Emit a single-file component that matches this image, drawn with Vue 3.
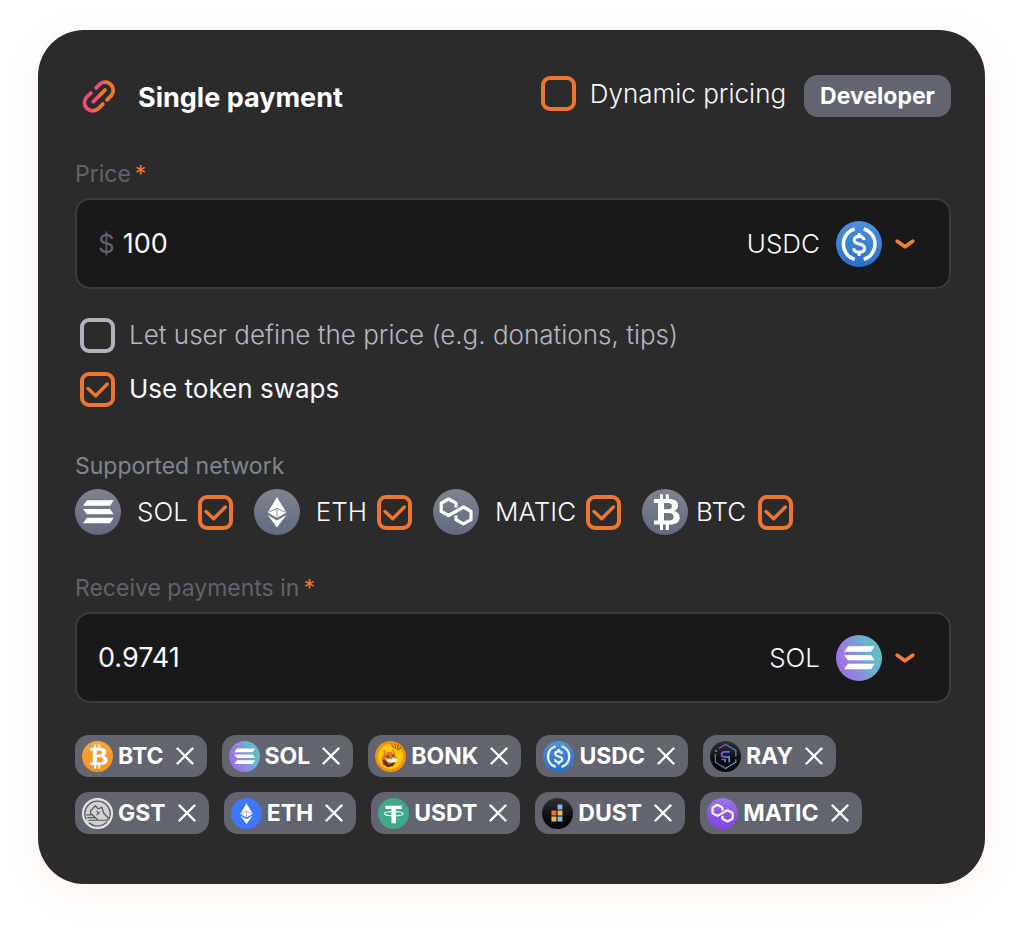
<script setup>
import { ref, reactive } from 'vue'

const dynamic = ref(false)
const userPrice = ref(false)
const swaps = ref(true)
const price = ref('100')
const receive = ref('0.9741')
const currency = ref('USDC')
const payout = ref('SOL')
const networks = reactive([
  { name: 'SOL', icon: 'sol', on: true },
  { name: 'ETH', icon: 'eth', on: true },
  { name: 'MATIC', icon: 'matic', on: true },
  { name: 'BTC', icon: 'btc', on: true, tight: true },
])
const tokenRows = reactive([
  ['BTC', 'SOL', 'BONK', 'USDC', 'RAY'],
  ['GST', 'ETH', 'USDT', 'DUST', 'MATIC'],
])
function removeToken(row, name) {
  row.splice(row.indexOf(name), 1)
}
</script>

<template>
  <main class="page">
    <svg class="sprite" aria-hidden="true">
      <defs>
        <linearGradient id="g-link"><stop offset=".38" stop-color="#ee4b77" /><stop offset=".56" stop-color="#f0762d" /></linearGradient>
        <linearGradient id="g-grey" x2="0" y2="1"><stop stop-color="#7f838f" /><stop offset="1" stop-color="#5f6b80" /></linearGradient>
        <linearGradient id="g-sol" x1="0" y1=".75" x2="1" y2=".4"><stop stop-color="#9d6de6" /><stop offset=".3" stop-color="#957fe4" /><stop offset=".75" stop-color="#69b3cf" /><stop offset="1" stop-color="#63bfc5" /></linearGradient>
        <linearGradient id="g-usdc" x2="0" y2="1"><stop stop-color="#5091d8" /><stop offset="1" stop-color="#2870cb" /></linearGradient>
        <linearGradient id="g-btc" x2="0" y2="1"><stop stop-color="#f9a545" /><stop offset="1" stop-color="#f7911a" /></linearGradient>
        <linearGradient id="g-matic" x2="0" y2="1"><stop stop-color="#a077e8" /><stop offset=".6" stop-color="#8850e6" /><stop offset="1" stop-color="#8247e5" /></linearGradient>
        <linearGradient id="g-black" x2="0" y2="1"><stop stop-color="#303030" /><stop offset=".7" stop-color="#080808" /></linearGradient>
        <linearGradient id="g-ray" x2="1" y2="1"><stop stop-color="#a943e8" /><stop offset=".55" stop-color="#4a7be8" /><stop offset="1" stop-color="#4cc6cf" /></linearGradient>
      </defs>
      <symbol id="m-sol" viewBox="0 0 46 46">
        <path fill="#fff" d="M12 11.3H38.7L35 16.7H8ZM8 20H35L38.7 25.3H12ZM12 28.7H38.7L35 34.3H8Z" />
      </symbol>
      <symbol id="m-eth" viewBox="0 0 46 46">
        <path fill="#fff" d="M23 8L32.3 23.5L23 29L13.7 23.5ZM13.7 26L23 31.5L32.3 26L23 38.5Z" />
        <path fill="none" stroke="#7c8798" stroke-width=".9" d="M14.5 23.2L23 19.5L31.5 23.2M23 19.5V29" />
      </symbol>
      <symbol id="m-matic" viewBox="0 0 46 46">
        <path fill="none" stroke="#fff" stroke-width="3.2" stroke-linejoin="round" d="M23 18.5V14.2L15.5 10L8.2 14.2V22.4L15.5 26.5L30.5 18L38 22.3V30.7L30.5 34.9L23 30.7V26.5" />
      </symbol>
      <symbol id="m-btc" viewBox="0 0 46 46">
        <path fill="#fff" fill-rule="evenodd" d="M12 10H27C33 10 36 12.5 36 16.5C36 19.5 34 21.3 32 22C35.5 22.8 37.7 25 37.7 28.5C37.7 33 34 35.5 28 35.5H12V31.5H16V14H12ZM22 14V20.3H26C28.5 20.3 30 19.2 30 17.2S28.5 14 26 14ZM22 24V31.5H27C30 31.5 31.7 30 31.7 27.7S30 24 27 24ZM18 5.3H21V10H18ZM23.8 5.3H26.8V10H23.8ZM18 35.5H21V41H18ZM23.8 35.5H26.8V41H23.8Z" />
      </symbol>
      <symbol id="m-usdc" viewBox="0 0 46 46">
        <g fill="none" stroke="#fff" stroke-width="3.4">
          <path d="M18.7 7.8A16 16 0 0 0 18.7 38.4M27.7 7.8A16 16 0 0 1 27.7 38.4" />
          <path stroke-width="3" d="M28.2 19C27.7 16.5 26 15.4 23.2 15.4C20 15.4 18.2 16.8 18.2 19.1C18.2 25 28.5 20.8 28.5 27.2C28.5 29.7 26.3 31.2 23.2 31.2C20 31.2 18 29.8 17.6 27.2M23.2 12V15.5M23.2 31V35" />
        </g>
      </symbol>
      <symbol id="n-sol" viewBox="0 0 46 46"><circle cx="23" cy="23" r="23" fill="url(#g-grey)" /><use href="#m-sol" width="46" height="46" /></symbol>
      <symbol id="n-eth" viewBox="0 0 46 46"><circle cx="23" cy="23" r="23" fill="url(#g-grey)" /><use href="#m-eth" width="46" height="46" /></symbol>
      <symbol id="n-matic" viewBox="0 0 46 46"><circle cx="23" cy="23" r="23" fill="url(#g-grey)" /><use href="#m-matic" width="46" height="46" /></symbol>
      <symbol id="n-btc" viewBox="0 0 46 46"><circle cx="23" cy="23" r="23" fill="url(#g-grey)" /><use href="#m-btc" width="46" height="46" /></symbol>
      <symbol id="t-SOL" viewBox="0 0 46 46"><circle cx="23" cy="23" r="23" fill="url(#g-sol)" /><use href="#m-sol" width="46" height="46" /></symbol>
      <symbol id="t-ETH" viewBox="0 0 46 46"><circle cx="23" cy="23" r="23" fill="#4076fb" /><use href="#m-eth" width="46" height="46" /></symbol>
      <symbol id="t-MATIC" viewBox="0 0 46 46"><circle cx="23" cy="23" r="23" fill="url(#g-matic)" /><use href="#m-matic" width="46" height="46" /></symbol>
      <symbol id="t-BTC" viewBox="0 0 46 46"><circle cx="23" cy="23" r="23" fill="url(#g-btc)" /><use href="#m-btc" width="46" height="46" /></symbol>
      <symbol id="t-USDC" viewBox="0 0 46 46"><circle cx="23" cy="23" r="23" fill="url(#g-usdc)" /><use href="#m-usdc" width="46" height="46" /></symbol>
      <symbol id="t-BONK" viewBox="0 0 46 46">
        <circle cx="23" cy="23" r="23" fill="#f5900c" />
        <circle cx="23" cy="23" r="18.5" fill="#fbca07" />
        <path stroke="#b5431a" stroke-width="1.8" stroke-linecap="round" d="M25 5.5L27 10M29.5 4.5L30 11M34.5 6L32.5 12M38 9.5L34.5 13" />
        <path fill="#dd7422" d="M13 12.5L19 17L24 16.5L27.5 12L29.5 20L32.5 26L29 35L20 38L12 34L10 26L12.5 21Z" />
        <path fill="#6f3014" d="M11 28L16 29L20 34L30 32L27 37L19 39L12 35Z" />
        <path fill="#fff" d="M17 26L24 27L31 23.5L33 27L30.5 31L22 32L17.5 30Z" />
        <path fill="#f8b66a" d="M14.5 14L18 18L15 20ZM26.5 14L27.5 19L24.5 18Z" />
        <circle cx="19" cy="23" r="1.4" fill="#331a10" /><circle cx="27" cy="21.5" r="1.2" fill="#331a10" />
        <path fill="#29201e" d="M28.5 24.5H32L30.5 26.5Z" />
      </symbol>
      <symbol id="t-RAY" viewBox="0 0 46 46">
        <circle cx="23" cy="23" r="23" fill="url(#g-black)" />
        <g fill="none" stroke="url(#g-ray)" stroke-width="1.8">
          <path d="M8 19V31.5L23 41L38.3 31.5V27M38.3 23V14L23 5L13 11" />
          <circle cx="8.8" cy="14.5" r=".8" />
          <path stroke-width="2.4" d="M29.5 16.2H21.5C15.5 16.2 15.5 23.5 21.5 23.5H28.5V31.5M17 27.5H22.5V31.5" />
        </g>
      </symbol>
      <symbol id="t-GST" viewBox="0 0 46 46">
        <circle cx="23" cy="23" r="22" fill="#d0d1d3" stroke="#ececee" stroke-width="2" />
        <g fill="none" stroke="#55565a" stroke-width="1.8" stroke-linejoin="round" stroke-linecap="round">
          <path d="M6 31A18.7 18.7 0 1 1 40 31M37 35.5A18.7 18.7 0 0 1 11 37" />
          <path d="M12.5 19L20 11.5L24 16L29.5 14L32.5 23L39 29.5L37.5 33H24L13 23ZM7 25H15M8.5 29H19M10 33H24M22 20L25.5 22L22 25" />
        </g>
      </symbol>
      <symbol id="t-USDT" viewBox="0 0 46 46">
        <circle cx="23" cy="23" r="23" fill="#3fa98b" />
        <path fill="#fff" d="M11 11.5H35.5V16.5H26.5V37.5H20V16.5H11Z" />
        <ellipse cx="23.2" cy="23.2" rx="13.8" ry="3.2" fill="none" stroke="#fff" stroke-width="1.7" />
      </symbol>
      <symbol id="t-DUST" viewBox="0 0 46 46">
        <circle cx="23" cy="23" r="23" fill="url(#g-black)" />
        <path fill="#82bbe1" d="M23 9.7H30.3V17H23ZM23 27.5H30.3V34.8H23Z" />
        <path fill="#f07837" d="M14 18.6H21.3V25.9H14Z" />
        <path fill="#f5b94d" d="M23 18.6H30.3V25.9H23ZM14 27.5H21.3V34.8H14Z" />
      </symbol>
      <symbol id="tick" viewBox="0 0 35 35"><path fill="none" stroke="#ee7630" stroke-width="3.4" stroke-linecap="round" stroke-linejoin="round" d="M8 16.5L15.7 23.8L27.3 12" /></symbol>
      <symbol id="chevron" viewBox="0 0 20 12"><path fill="none" stroke="#f57c31" stroke-width="3.8" stroke-linecap="round" stroke-linejoin="round" d="M2.3 3.2L10 8.8L17.7 3.2" /></symbol>
      <symbol id="cross" viewBox="0 0 18 18"><path fill="none" stroke="#fff" stroke-width="2.4" stroke-linecap="round" d="M1.5 1.5L16.5 16.5M16.5 1.5L1.5 16.5" /></symbol>
    </svg>

    <form class="card" @submit.prevent>
      <header class="head">
        <svg class="link-icon" viewBox="0 0 33 33" aria-hidden="true">
          <g fill="none" stroke="url(#g-link)" stroke-width="3.7" stroke-linecap="round">
            <path d="M13.7 8.6L17.5 4.8A7.9 7.9 0 0 1 28.6 15.9L24.3 20.2" />
            <path d="M8.6 13.7L4.4 17.7A7.9 7.9 0 0 0 15.5 28.9L20.2 24.4" />
            <path d="M11 22L22.3 10.7" />
          </g>
        </svg>
        <h1>Single payment</h1>
        <label class="option dynamic">
          <span class="box"><input v-model="dynamic" type="checkbox"><svg><use href="#tick" /></svg></span>
          Dynamic pricing
        </label>
        <button type="button" class="dev">Developer</button>
      </header>

      <label class="caption" for="price">Price<b>*</b></label>
      <div class="field">
        <span class="unit">$</span>
        <input id="price" v-model="price" type="text" inputmode="decimal">
        <label class="picker">
          <select v-model="currency" aria-label="Price currency"><option>USDC</option><option>SOL</option></select>
          <svg class="coin"><use :href="'#t-' + currency" /></svg>
          <svg class="chevron"><use href="#chevron" /></svg>
        </label>
      </div>

      <div class="options">
        <label class="option muted">
          <span class="box"><input v-model="userPrice" type="checkbox"><svg><use href="#tick" /></svg></span>
          Let user define the price (e.g. donations, tips)
        </label>
        <label class="option">
          <span class="box"><input v-model="swaps" type="checkbox"><svg><use href="#tick" /></svg></span>
          Use token swaps
        </label>
      </div>

      <p class="caption light">Supported network</p>
      <div class="networks">
        <label v-for="n in networks" :key="n.name" class="network" :class="{ tight: n.tight }">
          <svg class="coin"><use :href="'#n-' + n.icon" /></svg>
          <span class="name">{{ n.name }}</span>
          <span class="box"><input v-model="n.on" type="checkbox"><svg><use href="#tick" /></svg></span>
        </label>
      </div>

      <label class="caption" for="receive">Receive payments in<b>*</b></label>
      <div class="field">
        <input id="receive" v-model="receive" type="text" inputmode="decimal">
        <label class="picker">
          <select v-model="payout" aria-label="Payout currency"><option>SOL</option><option>USDC</option></select>
          <svg class="coin"><use :href="'#t-' + payout" /></svg>
          <svg class="chevron"><use href="#chevron" /></svg>
        </label>
      </div>

      <div class="tokens">
        <div v-for="(row, i) in tokenRows" :key="i" class="token-row">
          <span v-for="t in row" :key="t" class="chip">
            <svg class="chip-coin"><use :href="'#t-' + t" /></svg>
            <span>{{ t }}</span>
            <button type="button" :aria-label="'Remove ' + t" @click="removeToken(row, t)">
              <svg><use href="#cross" /></svg>
            </button>
          </span>
        </div>
      </div>
    </form>
  </main>
</template>

<style>
body {
  margin: 0;
  background: #fff;
}
</style>

<style scoped>
* {
  box-sizing: border-box;
}
.page {
  padding: 30px 39px 46px 38px;
  font-family: Inter, "Liberation Sans", sans-serif;
  font-size: 26px;
  font-weight: 400;
  line-height: 36px;
  color: #f8f8ff;
}
.sprite {
  position: absolute;
  width: 0;
  height: 0;
}
.card {
  padding: 44px 34px 50px 37px;
  border-radius: 46px;
  background: #2b2b2b;
  box-shadow: 0 8px 36px rgba(255, 130, 90, 0.11);
}
svg {
  display: block;
  flex: none;
}
input,
select,
button {
  font: inherit;
  color: inherit;
  margin: 0;
  padding: 0;
  border: 0;
  background: none;
}
button,
label,
select {
  cursor: pointer;
}
.head {
  display: flex;
  align-items: center;
  height: 43px;
  padding-left: 7px;
}
.link-icon {
  width: 34px;
  height: 34px;
}
h1 {
  flex: 1;
  margin: 4px 0 0 22px;
  font-size: 27px;
  font-weight: 700;
  white-space: nowrap;
  color: #fff;
}
.option {
  display: flex;
  align-items: center;
  gap: 14px;
}
.dynamic {
  margin-bottom: 4px;
  font-weight: 300;
}
.muted {
  font-weight: 300;
  color: #b5b7c5;
}
.box {
  display: grid;
  flex: none;
  width: 35px;
  height: 35px;
}
.box > * {
  grid-area: 1 / 1;
  width: 35px;
  height: 35px;
}
.box input {
  appearance: none;
  border: 4px solid #ee7630;
  border-radius: 9px;
}
.box svg {
  pointer-events: none;
  visibility: hidden;
}
.box input:checked + svg {
  visibility: visible;
}
.muted .box input {
  border-color: #b0b3be;
}
.dev {
  height: 42px;
  margin-left: 18px;
  padding: 0 16px;
  border-radius: 14px;
  background: #62646f;
  font-size: 23px;
  font-weight: 700;
  color: #fff;
}
.caption {
  display: block;
  margin: 42px 0 9px;
  font-size: 23px;
  line-height: 30px;
  color: #61626d;
}
.caption.light {
  margin: 44px 0 8px;
  color: #7f8591;
}
.caption b {
  margin-left: 4px;
  font-weight: 400;
  color: #ee7630;
}
.field {
  display: flex;
  align-items: center;
  height: 91px;
  padding: 0 34px 0 21px;
  border: 2px solid #3b3b3b;
  border-radius: 15px;
  background: #191919;
}
.unit {
  margin-right: 8px;
  color: #61626d;
}
.field > input {
  flex: 1;
  min-width: 0;
  font-size: 27px;
}
.picker {
  display: flex;
  align-items: center;
}
.picker select {
  width: 110px;
  margin-right: 16px;
  appearance: none;
  text-align-last: right;
  font-weight: 300;
}
.picker option {
  background: #191919;
}
.coin {
  width: 46px;
  height: 46px;
}
.chevron {
  width: 20px;
  height: 12px;
  margin-left: 13px;
}
.options {
  display: grid;
  justify-items: start;
  gap: 18px;
  margin: 28px 0 0 5px;
}
.networks {
  display: flex;
  flex-wrap: wrap;
  gap: 16px 21px;
}
.network {
  display: flex;
  align-items: center;
}
.name {
  margin: 0 10px 0 16px;
  font-weight: 300;
}
.tight .name {
  margin: 0 12px 0 8px;
}
.networks + .caption {
  margin-top: 38px;
}
.tokens {
  display: grid;
  gap: 15px;
  margin-top: 32px;
}
.token-row {
  display: flex;
  flex-wrap: wrap;
  gap: 15px;
}
.chip {
  display: flex;
  align-items: center;
  height: 42px;
  padding: 0 13px 0 7px;
  border-radius: 14px;
  background: #62646f;
  font-size: 23px;
  font-weight: 700;
  color: #fff;
}
.chip-coin {
  width: 31px;
  height: 31px;
  margin-right: 5px;
}
.chip button {
  margin-left: 12px;
}
.chip button svg {
  width: 18px;
  height: 18px;
}
</style>
